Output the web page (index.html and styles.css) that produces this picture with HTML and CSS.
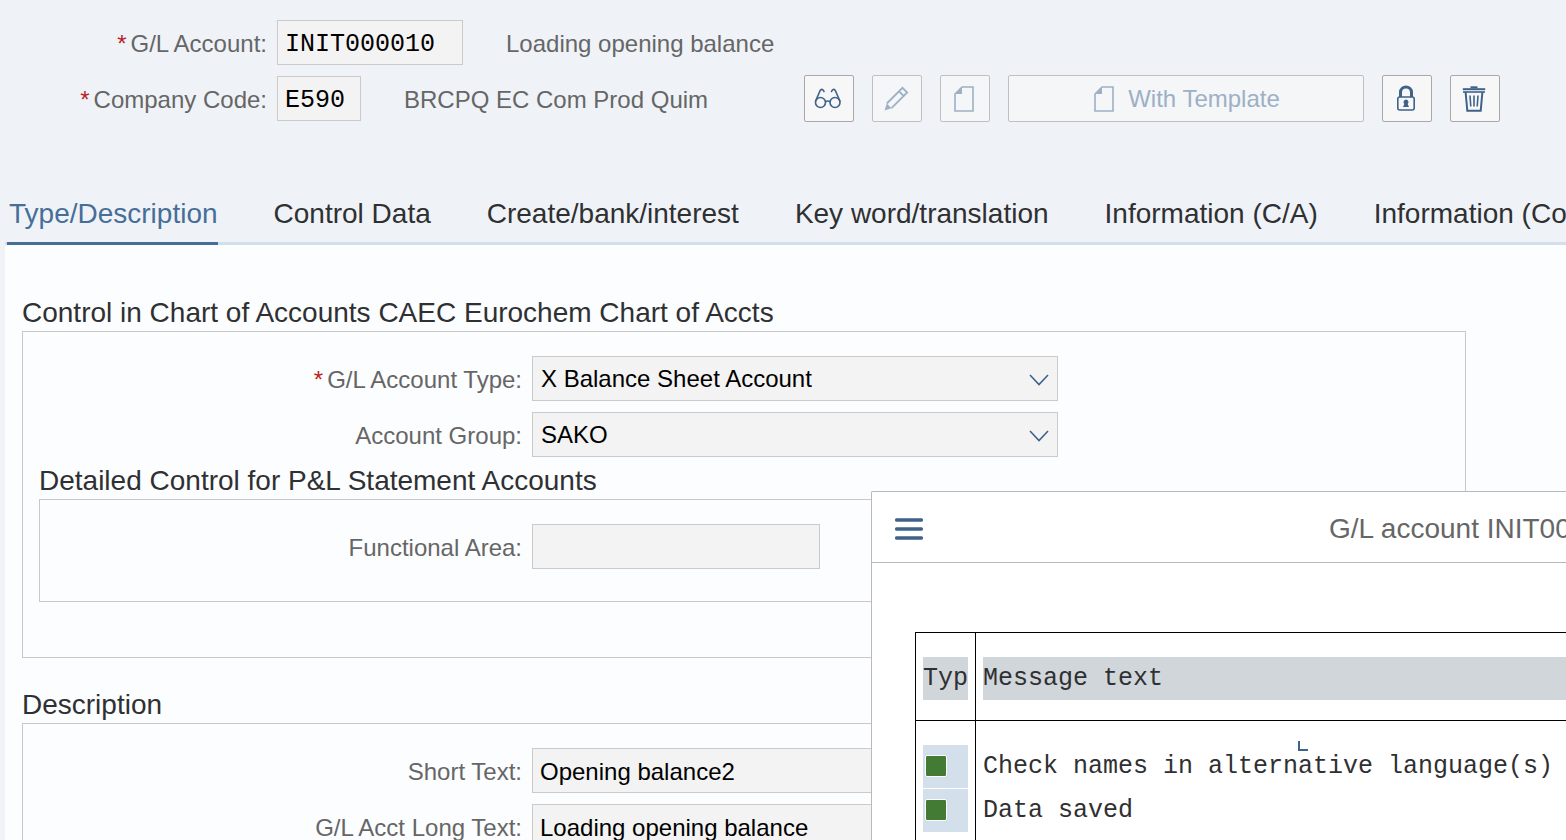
FILE: index.html
```html
<!DOCTYPE html>
<html lang="en">
<head>
<meta charset="utf-8">
<title>G/L Account</title>
<link rel="stylesheet" href="styles.css">
</head>
<body>
<header class="head">
  <div class="head-row">
    <label class="label head-label" for="account"><span class="req">*</span>G/L Account:</label>
    <input class="field mono account" id="account" value="INIT000010">
    <span class="note">Loading opening balance</span>
  </div>
  <div class="head-row">
    <label class="label head-label" for="company"><span class="req">*</span>Company Code:</label>
    <input class="field mono company" id="company" value="E590">
    <span class="note">BRCPQ EC Com Prod Quim</span>
    <div class="tools">
      <button class="tool" type="button" aria-label="Display">
        <svg width="28" height="24" viewBox="0 0 28 24" fill="none" stroke="#3f628a" stroke-width="1.6" stroke-linecap="round"><circle cx="6.500" cy="15.500" r="5"/><circle cx="21" cy="15.500" r="5"/><path d="M11.500 14.500Q13.700 13.600 16 14.500M1.600 14L6.200 3.500Q8.500 0.800 10 4.500M25.900 14L21.300 3.500Q19 0.800 17.500 4.500"/></svg>
      </button>
      <button class="tool" type="button" aria-label="Change" disabled>
        <svg width="26" height="26" viewBox="0 0 26 26" fill="none" stroke="#9db0c5" stroke-width="1.800"><path d="M3.800 17.500L19.500 1.800L24.200 6.500L8.500 22.200M16 5.300L20.700 10"/><path d="M1.500 24.500L3.800 17.500L8.500 22.200Z" fill="#9db0c5" stroke="none"/></svg>
      </button>
      <button class="tool" type="button" aria-label="Create" disabled>
        <svg width="20" height="26" viewBox="0 0 20 26"><path d="M8 1H19V25H1V8Z" fill="none" stroke="#9db0c5" stroke-width="1.600"/><path d="M1 8L8 1V8Z" fill="#9db0c5"/></svg>
      </button>
      <button class="tool template" type="button" disabled>
        <svg width="20" height="26" viewBox="0 0 20 26"><path d="M8 1H19V25H1V8Z" fill="none" stroke="#9db0c5" stroke-width="1.600"/><path d="M1 8L8 1V8Z" fill="#9db0c5"/></svg>
        With Template
      </button>
      <button class="tool" type="button" aria-label="Lock">
        <svg width="20" height="28" viewBox="0 0 20 28"><path d="M4.500 12V7.500C4.500 0.300 15.500 0.300 15.500 7.500V12" fill="none" stroke="#3f628a" stroke-width="3"/><rect x="1.800" y="12" width="16.400" height="13" rx="2" fill="none" stroke="#3f628a" stroke-width="1.600"/><path d="M10 14.500a2.700 2.700 0 0 1 1.700 4.600L13 22H7L8.300 19.100A2.700 2.700 0 0 1 10 14.500Z" fill="#3f628a"/></svg>
      </button>
      <button class="tool" type="button" aria-label="Delete">
        <svg width="24" height="28" viewBox="0 0 24 28" fill="none" stroke="#3f628a"><path d="M0.800 4.200H23.200" stroke-width="2"/><path d="M1 7H23" stroke-width="1.600"/><path d="M8.500 2.300H15.500" stroke-width="2"/><path d="M3.600 7L5.300 25.800H18.700L20.400 7" stroke-width="2"/><path d="M8 10.500L8.800 21.500M12 10.500V21.500M16 10.500L15.200 21.500" stroke-width="1.600"/></svg>
      </button>
    </div>
  </div>
</header>

<nav class="tabs">
  <a class="tab active" href="#type">Type/Description</a>
  <a class="tab" href="#control">Control Data</a>
  <a class="tab" href="#bank">Create/bank/interest</a>
  <a class="tab" href="#keyword">Key word/translation</a>
  <a class="tab" href="#chart">Information (C/A)</a>
  <a class="tab" href="#companyinfo">Information (CoCd)</a>
</nav>

<main class="panel">
  <h2 class="title">Control in Chart of Accounts CAEC Eurochem Chart of Accts</h2>
  <section class="group control">
    <div class="row">
      <label class="label row-label" for="type"><span class="req">*</span>G/L Account Type:</label>
      <div class="picker">
        <select class="field select" id="type"><option>X Balance Sheet Account</option></select>
        <svg class="chevron" width="20" height="12" viewBox="0 0 20 12"><path d="M1 1L10 10.500L19 1" fill="none" stroke="#3f628a" stroke-width="1.600"/></svg>
      </div>
    </div>
    <div class="row">
      <label class="label row-label" for="group">Account Group:</label>
      <div class="picker">
        <select class="field select" id="group"><option>SAKO</option></select>
        <svg class="chevron" width="20" height="12" viewBox="0 0 20 12"><path d="M1 1L10 10.500L19 1" fill="none" stroke="#3f628a" stroke-width="1.600"/></svg>
      </div>
    </div>
    <div class="nested">
      <h3 class="title">Detailed Control for P&amp;L Statement Accounts</h3>
      <section class="group detail">
        <div class="row">
          <label class="label row-label" for="area">Functional Area:</label>
          <input class="field area" id="area">
        </div>
      </section>
    </div>
  </section>

  <h2 class="title">Description</h2>
  <section class="group description">
    <div class="row">
      <label class="label row-label" for="short">Short Text:</label>
      <input class="field text" id="short" value="Opening balance2">
    </div>
    <div class="row">
      <label class="label row-label" for="long">G/L Acct Long Text:</label>
      <input class="field text" id="long" value="Loading opening balance">
    </div>
  </section>
</main>

<div class="dialog" role="dialog" aria-labelledby="dialog-title">
  <div class="dialog-head">
    <button class="menu" type="button" aria-label="Menu">
      <svg width="28" height="24" viewBox="0 0 28 24"><path d="M1.700 3H26.300M1.700 12H26.300M1.700 21H26.300" stroke="#3f628a" stroke-width="3.500" stroke-linecap="round"/></svg>
    </button>
    <div class="dialog-title" id="dialog-title">G/L account INIT000010</div>
  </div>
  <table class="log">
    <thead>
      <tr><th class="type"><div class="cap">Typ</div></th><th><div class="cap">Message text</div></th></tr>
    </thead>
    <tbody>
      <tr><td class="type"><div class="status"><span class="lamp"></span></div></td><td><div class="line">Check names in alternative language(s)<span class="corner"></span></div></td></tr>
      <tr><td class="type"><div class="status"><span class="lamp"></span></div></td><td><div class="line">Data saved</div></td></tr>
    </tbody>
  </table>
</div>
</body>
</html>
```
FILE: styles.css
```css
* { box-sizing: border-box; }

body {
  position: relative;
  margin: 0;
  height: 100vh;
  overflow: hidden;
  display: flex;
  flex-direction: column;
  background: #eff3f8;
  color: #2f3032;
  font: 24px/28px "Liberation Sans", Arial, sans-serif;
}

button, input, select { font: inherit; }

.head {
  display: flex;
  flex-direction: column;
  gap: 10px;
  padding: 20px 66px 0 0;
}

.head-row { display: flex; align-items: center; }

.label { padding-top: 2px; color: #666; text-align: right; white-space: nowrap; }
.head-label { width: 267px; margin-right: 10px; }
.req { margin-right: 4px; color: #bb1f26; }

.field {
  height: 45px;
  padding: 0 8px;
  border: 1px solid #cacaca;
  border-radius: 0;
  background: #f3f3f3;
  color: #000;
  outline: none;
}

.mono { padding: 4px 7px 0; font-family: "Liberation Mono", "Courier New", monospace; font-size: 25px; }
.account { width: 186px; }
.company { width: 84px; }
.note { margin-left: 43px; padding-top: 2px; color: #666; white-space: nowrap; }

.tools { display: flex; gap: 18px; margin-left: auto; }

.tool {
  display: flex;
  align-items: center;
  justify-content: center;
  gap: 14px;
  width: 50px;
  height: 47px;
  padding: 0 2px 0 0;
  border: 1px solid #a9a9a9;
  border-radius: 2px;
  background: #f7f7f7;
}

.tool:disabled { border-color: #bfc0c2; background: #f5f6f8; color: #9db0c5; }
.template { width: 356px; padding: 0 0 0 2px; }

.tabs {
  display: flex;
  gap: 54px;
  margin: 73px 0 0 5px;
  padding-left: 2px;
  border-bottom: 3px solid #d3dfea;
}

.tab {
  height: 50px;
  margin-bottom: -3px;
  padding: 3px 0 0 2px;
  color: #2f3032;
  font-size: 28px;
  line-height: 32px;
  text-decoration: none;
  white-space: nowrap;
}

.active { border-bottom: 3px solid #476e97; color: #476e97; }

.panel {
  flex: 1;
  min-height: 0;
  margin-left: 5px;
  padding: 44px 100px 0 17px;
  overflow: hidden;
  background: #fcfdff;
}

.title { margin: 0; padding: 7px 0 1px; font-size: 28px; font-weight: 400; line-height: 34px; white-space: nowrap; }
.group { border: 1px solid #c8c8c8; }

.control {
  display: flex;
  flex-direction: column;
  gap: 11px;
  margin-bottom: 23px;
  padding: 24px 16px 55px;
}

.row { display: flex; align-items: center; gap: 10px; }
.row-label { flex: none; width: 499px; }
.nested { margin-top: -11px; }
.nested .row-label { width: 482px; }
.control > .row { margin-left: -16px; }
.detail { padding: 24px 0 32px; }

.picker { position: relative; width: 526px; }
.select { appearance: none; width: 100%; }
.chevron { position: absolute; top: 18px; right: 9px; pointer-events: none; }
.area { width: 288px; }

.description { display: flex; flex-direction: column; gap: 11px; padding: 24px 0 32px; }
.text { width: 700px; padding: 2px 7px 0; }

.dialog {
  position: absolute;
  top: 491px;
  right: 0;
  bottom: 0;
  left: 871px;
  display: flex;
  flex-direction: column;
  overflow: hidden;
  border: 1px solid #b9b9b9;
  border-width: 1px 0 0 1px;
  border-radius: 2px 0 0 0;
  background: #fff;
}

.dialog-head { display: flex; flex: none; align-items: center; height: 71px; padding-top: 3px; border-bottom: 1px solid #b9b9b9; }
.menu { display: flex; margin-left: 23px; padding: 0; border: 0; background: none; }
.dialog-title { margin-left: 406px; color: #666; font-size: 28px; line-height: 32px; white-space: nowrap; }

.log {
  width: calc(100% - 43px);
  margin: 69px 0 0 43px;
  border-collapse: separate;
  border-spacing: 0;
  border-top: 1px solid #000;
  border-left: 1px solid #000;
  font: 25px/43px "Liberation Mono", "Courier New", monospace;
  white-space: pre;
}

.log th, .log td { padding: 0 0 1px 7px; font-weight: 400; text-align: left; vertical-align: top; }
.log .type { width: 60px; padding-right: 7px; border-right: 1px solid #000; }
.log th { padding-top: 24px; padding-bottom: 20px; border-bottom: 1px solid #000; }
.log tbody tr:first-child td { padding-top: 24px; }
.log tbody tr:last-child td { padding-bottom: 24px; }
.cap { background: #d1d6da; }

.status { display: flex; align-items: center; height: 43px; padding: 0 0 2px 2px; background: #d3dfea; }
.lamp { width: 22px; height: 22px; border: 1px solid #fff; border-radius: 2px; background: #437a34; }
.line { position: relative; }

.corner {
  position: absolute;
  top: -4px;
  left: 315px;
  width: 10px;
  height: 10px;
  border: 2px solid #3f628a;
  border-width: 0 0 2px 2px;
}
```
